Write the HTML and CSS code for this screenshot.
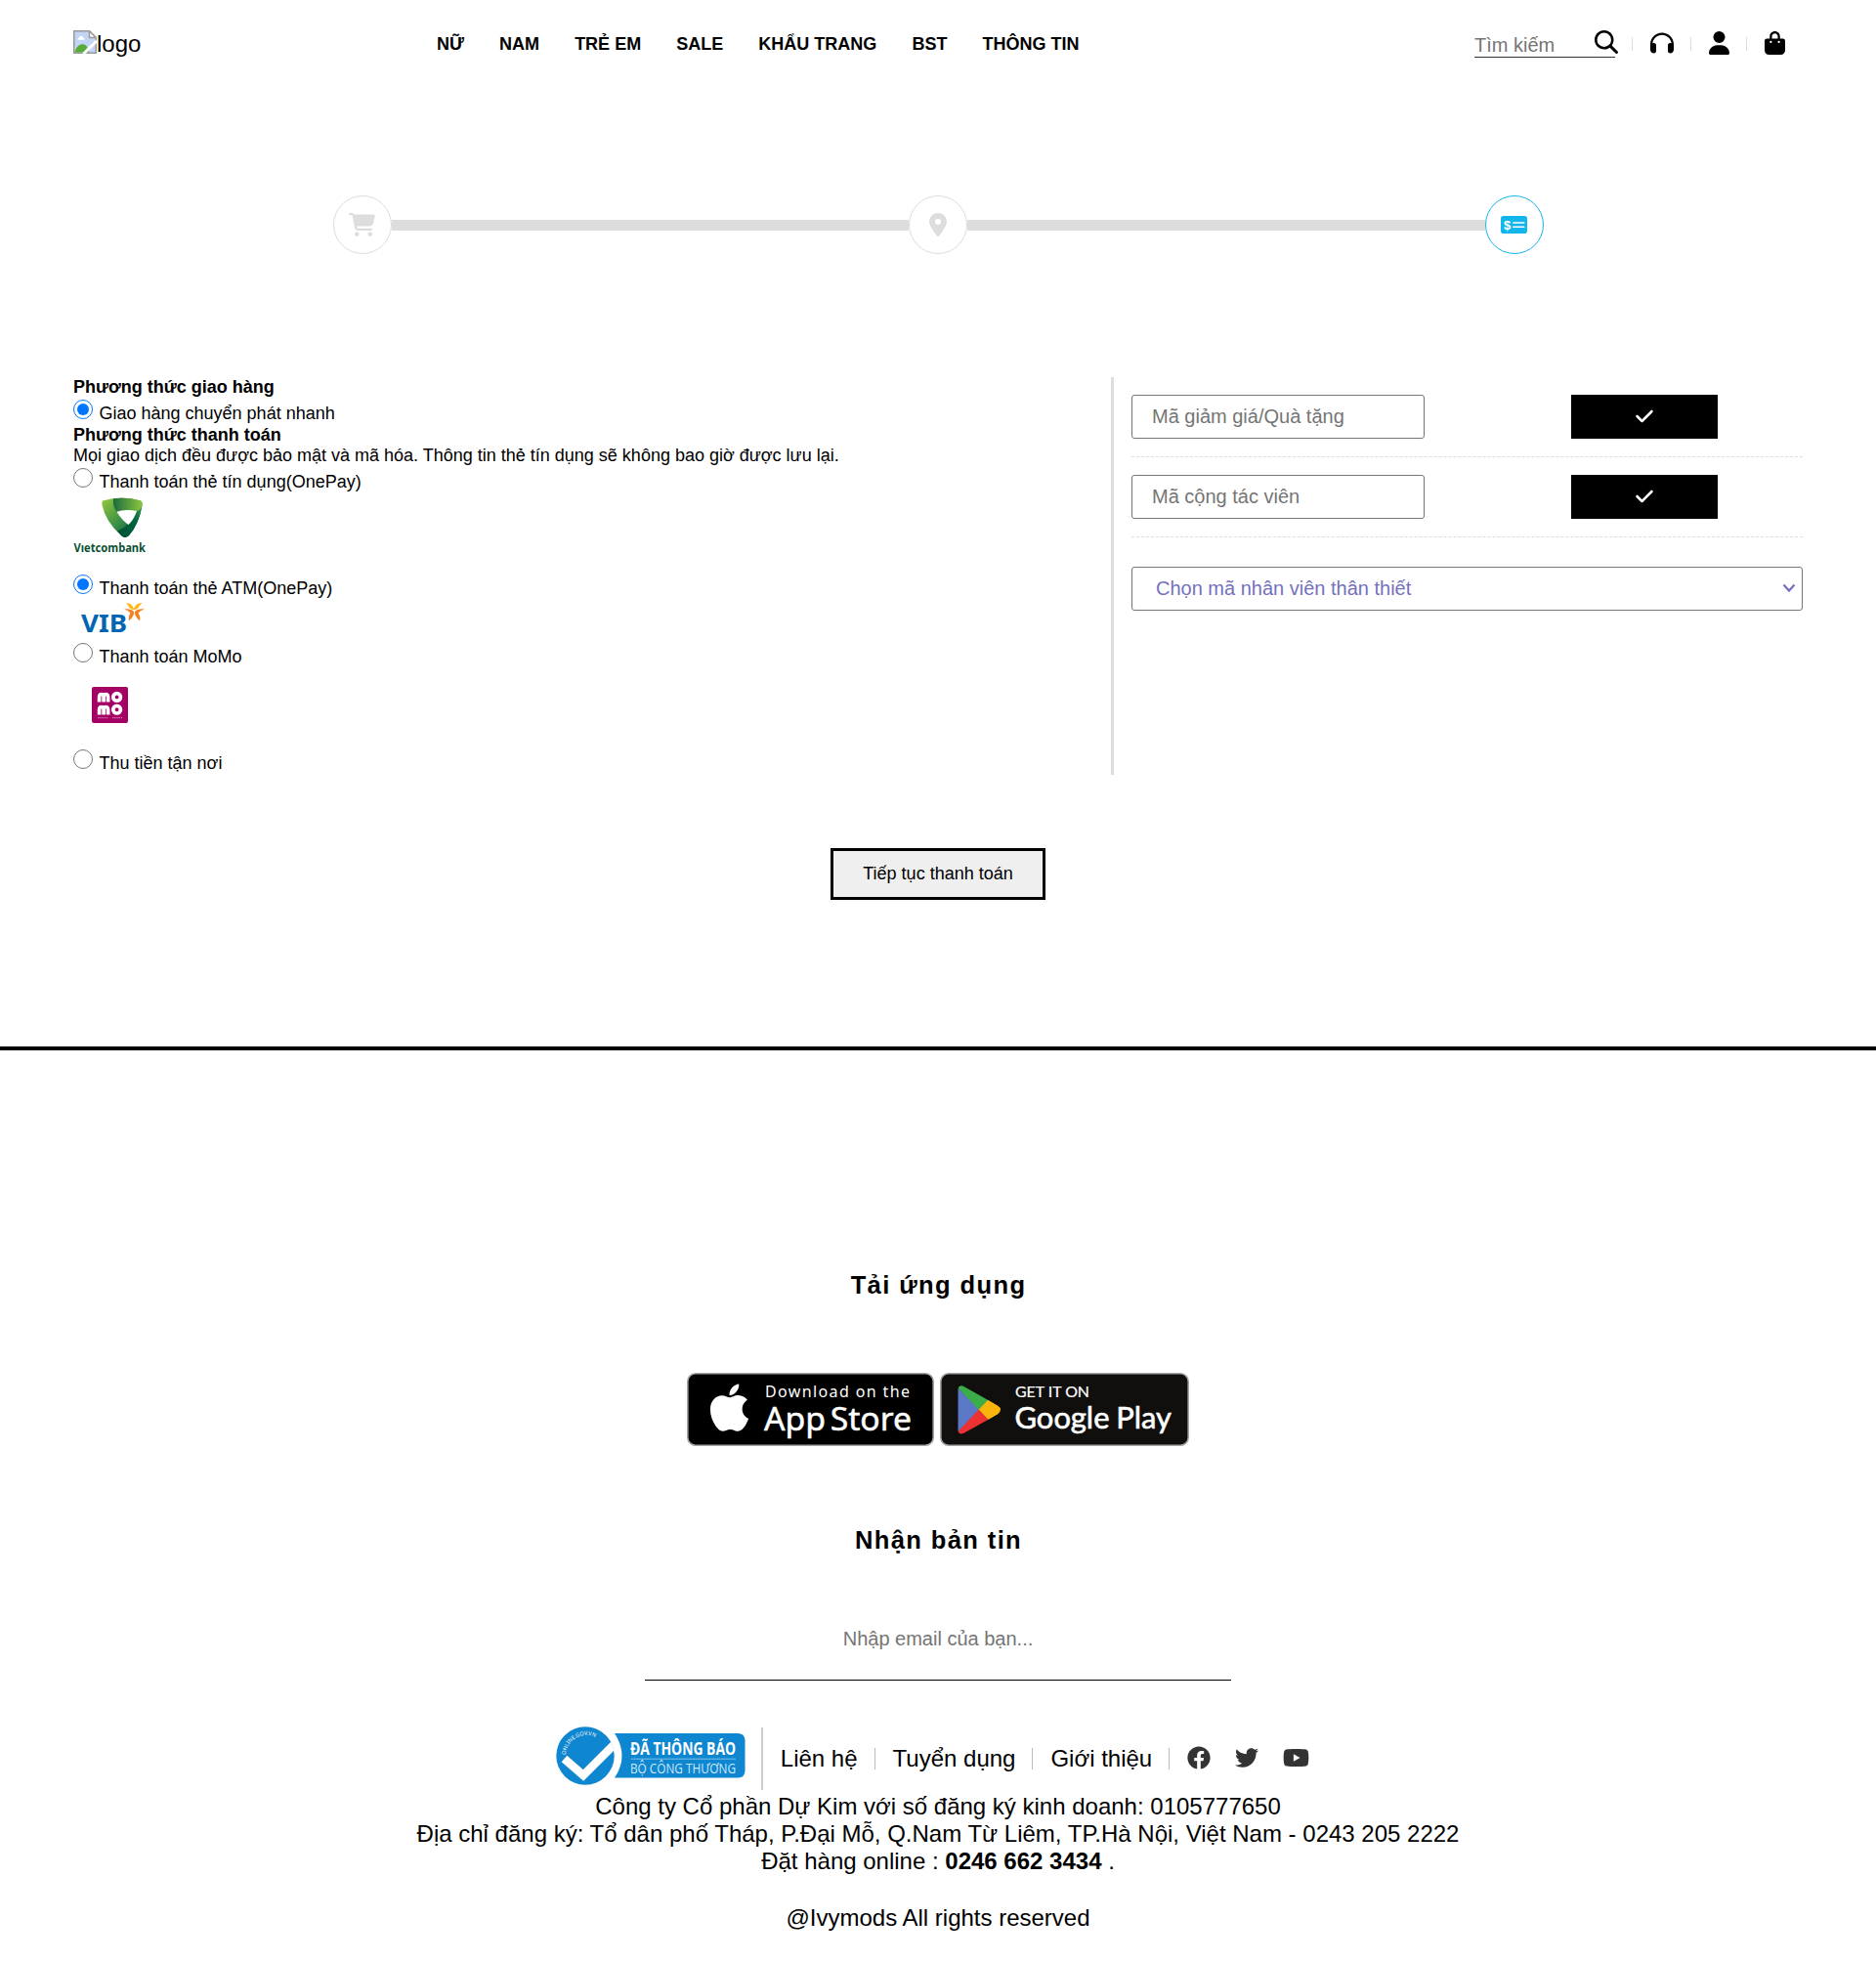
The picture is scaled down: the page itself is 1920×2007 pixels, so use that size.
FILE: index.html
```html
<!DOCTYPE html>
<html lang="vi">
<head>
<meta charset="UTF-8">
<title>Thanh toán</title>
<link rel="stylesheet" href="styles.css">
</head>
<body>
<header class="header">
  <a class="logo">
    <svg width="24" height="24" viewBox="0 0 16 16" aria-hidden="true">
      <path d="M.5 .5h10.5l4.500 4.500v10.500h-15z" fill="#c3d5f5" stroke="#9a9a9a"/>
      <path d="M1 15c1-4 3-5.500 5.500-5.500S10 12 11 15z" fill="#57ab36"/>
      <path d="M3 6.500c0-1.500 1-1.500 1.300-2.200.8-1 2-.5 2.200.5.800 0 1.300.7 1.100 1.700z" fill="#fff"/>
      <path d="M11 .5v4.500h4.500z" fill="#fff" stroke="#9a9a9a"/>
      <path d="M16 7.200L7 16" stroke="#fff" stroke-width="2"/>
    </svg><span>logo</span>
  </a>
  <nav class="menu">
    <a>NỮ</a><a>NAM</a><a>TRẺ EM</a><a>SALE</a><a>KHẨU TRANG</a><a>BST</a><a>THÔNG TIN</a>
  </nav>
  <div class="tools">
    <div class="tool">
      <div class="search">
        <input class="search-input" type="text" placeholder="Tìm kiếm">
        <svg class="search-icon" width="24" height="24" viewBox="0 0 512 512"><path d="M416 208c0 45.900-14.900 88.300-40 122.700L502.600 457.400c12.500 12.500 12.500 32.800 0 45.300s-32.800 12.500-45.300 0L330.700 376c-34.400 25.200-76.800 40-122.700 40C93.100 416 0 322.900 0 208S93.100 0 208 0S416 93.100 416 208zM208 362a154 154 0 1 0 0-308 154 154 0 1 0 0 308z"/></svg>
      </div>
    </div>
    <div class="tool"><svg width="24" height="24" viewBox="0 0 512 512"><path d="M256 80C149.900 80 62.400 159.400 49.600 262c9.400-3.800 19.600-6 30.400-6c26.500 0 48 21.500 48 48V432c0 26.500-21.500 48-48 48c-44.200 0-80-35.800-80-80V288C0 146.600 114.600 32 256 32s256 114.600 256 256v112c0 44.200-35.800 80-80 80c-26.500 0-48-21.500-48-48V304c0-26.500 21.500-48 48-48c10.800 0 21 2.100 30.400 6C449.600 159.400 362.100 80 256 80z"/></svg></div>
    <div class="tool"><svg width="21" height="24" viewBox="0 0 448 512"><path d="M224 256A128 128 0 1 0 224 0a128 128 0 1 0 0 256zm-45.700 48C79.800 304 0 383.800 0 482.300C0 498.700 13.300 512 29.700 512H418.300c16.400 0 29.700-13.300 29.700-29.700C448 383.800 368.200 304 269.700 304H178.300z"/></svg></div>
    <div class="tool"><svg width="21" height="24" viewBox="0 0 448 512"><path d="M160 112c0-35.300 28.700-64 64-64s64 28.700 64 64v48H160V112zm-48 48H48c-26.500 0-48 21.500-48 48V416c0 53 43 96 96 96H352c53 0 96-43 96-96V208c0-26.500-21.500-48-48-48H336V112C336 50.100 285.900 0 224 0S112 50.100 112 112v48zm24 48a24 24 0 1 1 0 48 24 24 0 1 1 0-48zm152 24a24 24 0 1 1 48 0 24 24 0 1 1 -48 0z"/></svg></div>
  </div>
</header>

<section class="steps">
  <div class="step"><svg width="27" height="24" viewBox="0 0 576 512"><path d="M0 24C0 10.700 10.700 0 24 0H69.500c22 0 41.500 12.800 50.600 32h411c26.300 0 45.500 25 38.600 50.400l-41 152.300c-8.500 31.400-37 53.300-69.500 53.300H170.700l5.400 28.500c2.200 11.300 12.100 19.500 23.600 19.500H488c13.300 0 24 10.700 24 24s-10.700 24-24 24H199.700c-34.600 0-64.300-24.600-70.700-58.500L77.400 54.500c-.7-3.800-4-6.500-7.900-6.500H24C10.700 48 0 37.300 0 24zM128 464a48 48 0 1 1 96 0 48 48 0 1 1 -96 0zm336-48a48 48 0 1 1 0 96 48 48 0 1 1 0-96z"/></svg></div>
  <div class="step-line"></div>
  <div class="step"><svg width="18" height="24" viewBox="0 0 384 512"><path d="M215.700 499.200C267 435 384 279.400 384 192C384 86 298 0 192 0S0 86 0 192c0 87.400 117 243 168.300 307.200c12.300 15.300 35.100 15.300 47.400 0zM192 128a64 64 0 1 1 0 128 64 64 0 1 1 0-128z"/></svg></div>
  <div class="step-line"></div>
  <div class="step step-active"><svg width="27" height="18" viewBox="0 0 27 18"><rect width="27" height="18" rx="2.800"/><path d="M12.800 7h11M12.800 11.300h11" stroke="#fff" stroke-width="1.500" stroke-linecap="round"/><text class="dollar" x="3" y="13.600">$</text></svg></div>
</section>

<main class="payment">
  <div class="methods">
    <p class="method-title">Phương thức giao hàng</p>
    <label class="option"><input type="radio" name="ship" checked><span>Giao hàng chuyển phát nhanh</span></label>
    <p class="method-title">Phương thức thanh toán</p>
    <p class="method-note">Mọi giao dịch đều được bảo mật và mã hóa. Thông tin thẻ tín dụng sẽ không bao giờ được lưu lại.</p>
    <label class="option"><input type="radio" name="card"><span>Thanh toán thẻ tín dụng(OnePay)</span></label>
    <div class="brand brand-tall">
      <svg width="76" height="82" viewBox="0 0 76 82">
        <defs>
          <linearGradient id="vcbLeft" x1="0" y1="0" x2=".9" y2="1"><stop offset="0" stop-color="#98cb3c"/><stop offset=".55" stop-color="#3b8f47"/><stop offset="1" stop-color="#00573a"/></linearGradient>
          <linearGradient id="vcbTop" x1="0" y1="0" x2="1" y2="0"><stop offset="0" stop-color="#1c6b3f"/><stop offset="1" stop-color="#8cc63f"/></linearGradient>
          <linearGradient id="vcbRight" x1="1" y1="0" x2="0" y2="1"><stop offset="0" stop-color="#3f9a49"/><stop offset=".4" stop-color="#00643f"/><stop offset="1" stop-color="#004d35"/></linearGradient>
        </defs>
        <path d="M30 8.500Q40 5.500 50 5.500T69 8.500Q71 9.500 70.500 13Q67.500 32 57 44Q53 47.500 49.500 44.500Q33 30 29.500 13Q29 9.500 30 8.500z" fill="url(#vcbLeft)"/>
        <path d="M70.500 13Q67.500 32 57 44Q53 47.500 49.500 44.500L45 39.500Q59 34 64 19Q68 18 70.500 13z" fill="url(#vcbRight)"/>
        <path d="M41 6.300Q55 4.500 69 8.500Q71 10 70.300 14Q67 21 60 20Q52 17.500 44 20Q40 13 41 6.300z" fill="url(#vcbTop)"/>
        <path d="M44.500 19.800Q53 16.500 65 19Q62 28 56.500 33Q50 29 44.500 19.800z" fill="#fff"/>
        <text class="vcb-name" x=".5" y="61" textLength="73.500" lengthAdjust="spacingAndGlyphs">Vıetcombank</text>
      </svg>
    </div>
    <label class="option"><input type="radio" name="atm" checked><span>Thanh toán thẻ ATM(OnePay)</span></label>
    <div class="brand brand-short">
      <svg width="76" height="42" viewBox="0 0 76 42">
        <text class="vib-name" x="8" y="34" textLength="47" lengthAdjust="spacingAndGlyphs">VIB</text>
        <path d="M54 4q6 0 8 6q2-6 8.500-6q-2.500 2.500-4 5q-1.500 2-4.500 2t-4.500-2q-1.500-3-3.500-5z" fill="#fdb515"/>
        <path d="M52 10.500q7-1 10 2.500q1 4-5 9.500q-1-5 1.500-8q-2-3-6.500-4zM73 10.500q-7-1-10 2.500q-1 4 5 9.500q1-5-1.500-8q2-3 6.500-4z" fill="#f58220"/>
      </svg>
    </div>
    <label class="option"><input type="radio" name="momo"><span>Thanh toán MoMo</span></label>
    <div class="brand brand-tall">
      <svg width="76" height="81" viewBox="0 0 76 81">
        <rect x="19" y="20" width="37" height="37" rx="2" fill="#a50064"/>
        <g fill="none" stroke="#fff" stroke-width="3.700">
          <path d="M26.600 35.500v-5q0-3 2.200-3t2.300 3v5v-5q0-3 2.200-3t2.300 3v5"/>
          <circle cx="44.600" cy="30.400" r="3.800"/>
          <path d="M26.600 48.500v-5q0-3 2.200-3t2.300 3v5v-5q0-3 2.200-3t2.300 3v5"/>
          <circle cx="44.600" cy="43.200" r="3.800"/>
          <path d="M25 51.700h11M40 51.700h10" stroke-width=".8" stroke-dasharray="1.500 .7" opacity=".7"/>
        </g>
      </svg>
    </div>
    <label class="option"><input type="radio" name="cod"><span>Thu tiền tận nơi</span></label>
  </div>
  <div class="codes">
    <div class="code-row"><input class="code-input" type="text" placeholder="Mã giảm giá/Quà tặng"><button class="code-button"><svg width="18" height="20" viewBox="0 0 448 512"><path d="M438.600 105.400c12.500 12.500 12.500 32.800 0 45.300l-256 256c-12.500 12.500-32.800 12.500-45.300 0l-128-128c-12.500-12.500-12.500-32.800 0-45.300s32.800-12.500 45.300 0L160 338.700 393.400 105.400c12.500-12.500 32.800-12.500 45.300 0z"/></svg></button></div>
    <div class="code-row"><input class="code-input" type="text" placeholder="Mã cộng tác viên"><button class="code-button"><svg width="18" height="20" viewBox="0 0 448 512"><path d="M438.600 105.400c12.500 12.500 12.500 32.800 0 45.300l-256 256c-12.500 12.500-32.800 12.500-45.300 0l-128-128c-12.500-12.500-12.500-32.800 0-45.300s32.800-12.500 45.300 0L160 338.700 393.400 105.400c12.500-12.500 32.800-12.500 45.300 0z"/></svg></button></div>
    <div class="staff-select"><span>Chọn mã nhân viên thân thiết</span><svg width="14" height="10" viewBox="0 0 14 10"><path d="M1.500 1.500L7 7.500L12.500 1.500" fill="none" stroke="#7470bd" stroke-width="2.200"/></svg></div>
  </div>
</main>
<div class="continue"><button class="continue-button">Tiếp tục thanh toán</button></div>

<section class="app">
  <h2 class="section-title">Tải ứng dụng</h2>
  <div class="stores">
    <svg width="253" height="75" viewBox="0 0 253 75">
      <rect x=".8" y=".8" width="251.400" height="73.400" rx="8" fill="#000" stroke="#a6a6a6" stroke-width="1.600"/>
      <g transform="translate(23.500 8) scale(.104 .108)"><path fill="#fff" d="M318.700 268.700c-.2-36.700 16.400-64.400 50-84.800-18.800-26.900-47.200-41.700-84.700-44.600-35.500-2.800-74.300 20.700-88.500 20.700-15 0-49.400-19.700-76.400-19.700C63.300 141.200 4 184.800 4 273.500q0 39.300 14.400 81.200c12.800 36.700 59 126.700 107.200 125.200 25.200-.6 43-17.900 75.800-17.900 31.800 0 48.300 17.900 76.400 17.900 48.600-.7 90.400-82.500 102.600-119.300-65.200-30.700-61.700-90-61.700-91.900zm-56.600-164.200c27.300-32.400 24.800-61.900 24-72.500-24.100 1.400-52 16.400-67.900 34.900-17.500 19.800-27.800 44.300-25.600 71.900 26.100 2 49.900-11.400 69.500-34.300z"/></g>
      <text class="apple-small" x="80" y="25" textLength="148">Download on the</text>
      <text class="apple-big" x="79" y="59" textLength="151" lengthAdjust="spacingAndGlyphs">App Store</text>
    </svg>
    <svg width="255" height="75" viewBox="0 0 255 75">
      <rect x=".8" y=".8" width="253.400" height="73.400" rx="8" fill="#100f0d" stroke="#a6a6a6" stroke-width="1.600"/>
      <clipPath id="playShape"><path d="M18.500 17Q19 12.500 23.500 13.500L59 33.500Q65 37.500 59 42.500L24 62Q19 63.500 18.500 59z"/></clipPath>
      <g clip-path="url(#playShape)">
        <path d="M17 14L41 37.800L17 62z" fill="#5a78c6"/>
        <path d="M17 14L23 10L51 28L39.500 37.800z" fill="#3cae49"/>
        <path d="M39.500 37.800L50 27L66 37.500L50 49z" fill="#f9b50b"/>
        <path d="M17 61.500L39.500 37.800L50 48.500L24 66z" fill="#ec3132"/>
      </g>
      <text class="google-small" x="77" y="24.700" textLength="76" lengthAdjust="spacingAndGlyphs">GET IT ON</text>
      <text class="google-big" x="76.500" y="57" textLength="160.500" lengthAdjust="spacingAndGlyphs">Google Play</text>
    </svg>
  </div>
  <h2 class="section-title">Nhận bản tin</h2>
  <input class="email" type="text" placeholder="Nhập email của bạn...">
</section>

<footer class="footer">
  <div class="footer-links">
    <div class="notice">
      <svg width="194" height="60" viewBox="0 0 194 60">
        <path d="M60 7H186q7.500 0 7.500 7.500V45q0 7.500-7.500 7.500H60Q75 30 60 7z" fill="#0e86d0"/>
        <circle cx="30" cy="30" r="29.700" fill="#0e86d0"/>
        <clipPath id="tickArea"><circle cx="30" cy="30" r="29.800"/></clipPath>
        <path d="M8.500 33L28 50L66 12" fill="none" stroke="#fff" stroke-width="8.500" clip-path="url(#tickArea)"/>
        <path id="arc" d="M10 29A21 21 0 0 1 48 17.500" fill="none"/>
        <text class="notice-arc"><textPath href="#arc">ONLINE.GOV.VN</textPath></text>
        <text class="notice-big" x="76" y="28.700" textLength="108" lengthAdjust="spacingAndGlyphs">ĐÃ THÔNG BÁO</text>
        <path d="M77 33.200H184" stroke="#7cc0e9"/>
        <text class="notice-small" x="76" y="48" textLength="108" lengthAdjust="spacingAndGlyphs">BỘ CÔNG THƯƠNG</text>
      </svg>
    </div>
    <a class="link">Liên hệ</a><a class="link">Tuyển dụng</a><a class="link">Giới thiệu</a>
    <div class="social">
      <svg width="24" height="24" viewBox="0 0 512 512"><path d="M504 256C504 119 393 8 256 8S8 119 8 256c0 123.780 90.690 226.380 209.250 245V327.690h-63V256h63v-54.640c0-62.150 37-96.480 93.670-96.480 27.140 0 55.520 4.840 55.520 4.840v61h-31.280c-30.800 0-40.410 19.120-40.410 38.730V256h68.780l-11 71.690h-57.780V501C413.310 482.380 504 379.780 504 256z"/></svg>
      <svg width="24" height="24" viewBox="0 0 512 512"><path d="M459.370 151.716c.325 4.548.325 9.097.325 13.645 0 138.720-105.583 298.558-298.558 298.558-59.452 0-114.680-17.219-161.137-47.106 8.447.974 16.568 1.299 25.340 1.299 49.055 0 94.213-16.568 130.274-44.832-46.132-.975-84.792-31.188-98.112-72.772 6.498.974 12.995 1.624 19.818 1.624 9.421 0 18.843-1.300 27.614-3.573-48.081-9.747-84.143-51.980-84.143-102.985v-1.299c13.969 7.797 30.214 12.670 47.431 13.319-28.264-18.843-46.781-51.005-46.781-87.391 0-19.492 5.197-37.360 14.294-52.954 51.655 63.675 129.300 105.258 216.365 109.807-1.624-7.797-2.599-15.918-2.599-24.040 0-57.828 46.782-104.934 104.934-104.934 30.213 0 57.502 12.670 76.670 33.137 23.715-4.548 46.456-13.320 66.599-25.340-7.798 24.366-24.366 44.833-46.132 57.827 21.117-2.273 41.584-8.122 60.426-16.243-14.292 20.791-32.161 39.308-52.628 54.253z"/></svg>
      <svg width="27" height="24" viewBox="0 0 576 512"><path d="M549.655 124.083c-6.281-23.650-24.787-42.276-48.284-48.597C458.781 64 288 64 288 64S117.220 64 74.629 75.486c-23.497 6.322-42.003 24.947-48.284 48.597-11.412 42.867-11.412 132.305-11.412 132.305s0 89.438 11.412 132.305c6.281 23.650 24.787 41.500 48.284 47.821C117.220 448 288 448 288 448s170.780 0 213.371-11.486c23.497-6.321 42.003-24.171 48.284-47.821 11.412-42.867 11.412-132.305 11.412-132.305s0-89.438-11.412-132.305zm-317.510 213.508V175.185l142.739 81.205-142.739 81.201z"/></svg>
    </div>
  </div>
  <p class="address">Công ty Cổ phần Dự Kim với số đăng ký kinh doanh: 0105777650<br>Địa chỉ đăng ký: Tổ dân phố Tháp, P.Đại Mỗ, Q.Nam Từ Liêm, TP.Hà Nội, Việt Nam - 0243 205 2222<br>Đặt hàng online : <b>0246 662 3434</b> .</p>
  <p class="copyright">@Ivymods All rights reserved</p>
</footer>
</body>
</html>
```
FILE: styles.css
```css
* {
  box-sizing: border-box;
  margin: 0;
  padding: 0;
}

body {
  background: #fff;
  color: #000;
  font-family: "Liberation Sans", Arial, sans-serif;
  font-size: 24px;
  line-height: 28px;
}

svg {
  display: block;
  flex: none;
}

input,
button {
  font-family: inherit;
}

input::placeholder {
  color: #757575;
  opacity: 1;
}

/* Header */
.header {
  display: flex;
  align-items: center;
  height: 90px;
  padding: 0 75px;
}

.logo {
  display: flex;
  align-items: center;
  width: 372px;
  padding-bottom: 3px;
}

.logo svg {
  margin-top: -2px;
}

.logo span {
  padding-top: 3px;
}

.menu {
  display: flex;
  gap: 36.1px;
  font-size: 18px;
  font-weight: bold;
}

.tools {
  display: flex;
  align-items: center;
  height: 90px;
  margin-left: auto;
}

.tool {
  display: flex;
  align-items: center;
  height: 14px;
  padding: 0 17px 0 18px;
  border-right: 1px solid #ddd;
}

.tool:first-child {
  padding-left: 0;
}

.tool:last-child {
  padding-right: 18px;
  border-right: 0;
}

.tool svg {
  margin-bottom: 2px;
  fill: #000;
}

.search {
  position: relative;
  width: 144px;
}

.search-input {
  display: block;
  width: 144px;
  height: 27px;
  padding-top: 3px;
  border: 0;
  border-bottom: 1px solid #333;
  background: transparent;
  font-size: 20px;
}

.search-icon {
  position: absolute;
  top: -1px;
  right: -3px;
}

/* Progress */
.steps {
  display: flex;
  align-items: center;
  width: 1239px;
  margin: 110px auto 126px;
}

.step {
  display: flex;
  flex: none;
  align-items: center;
  justify-content: center;
  width: 60px;
  height: 60px;
  border: 1px solid #ddd;
  border-radius: 50%;
  fill: #ddd;
}

.step-line {
  flex: 1;
  height: 11px;
  background: #ddd;
}

.step-active {
  border-color: #12b6ea;
  fill: #12b6ea;
}

.dollar {
  fill: #fff;
  font: bold 13px "Liberation Sans", sans-serif;
}

/* Payment */
.payment {
  display: flex;
  height: 407px;
  padding: 0 75px;
  font-size: 18px;
}

.methods {
  width: 1062px;
}

.method-title,
.method-note {
  height: 21px;
  line-height: 21px;
}

.method-title {
  font-weight: bold;
}

.option {
  display: flex;
  gap: 6.5px;
  height: 27.5px;
}

.option input {
  width: 20px;
  height: 20px;
  margin-top: 2px;
}

.option span {
  padding-top: 6px;
  line-height: 21px;
}

.brand-tall {
  height: 81.5px;
}

.brand-short {
  height: 42.5px;
}

.vcb-name {
  fill: #0b4f33;
  font: bold 13px "Noto Sans", sans-serif;
}

.vib-name {
  fill: #0066b3;
  font: bold 25px "Noto Sans", sans-serif;
}

.codes {
  flex: 1;
  padding-left: 18px;
  border-left: 3px solid #ddd;
}

.code-row {
  display: flex;
  justify-content: space-between;
  padding: 18px 87px 18px 0;
  border-bottom: 1px dashed #ddd;
}

.code-input {
  width: 300px;
  height: 45px;
  padding: 0 20px;
  border: 1px solid #767676;
  border-radius: 3px;
  font-size: 20px;
}

.code-button {
  display: flex;
  align-items: center;
  justify-content: center;
  width: 150px;
  height: 45px;
  padding-bottom: 2px;
  border: 0;
  background: #000;
  fill: #fff;
}

.staff-select {
  display: flex;
  align-items: center;
  justify-content: space-between;
  height: 45px;
  margin-top: 30px;
  padding: 0 6px 1px 24px;
  border: 1px solid #767676;
  border-radius: 3px;
  color: #7470bd;
  font-size: 20px;
}

.continue {
  display: flex;
  justify-content: center;
  padding: 75px 0 150px;
  border-bottom: 4px solid #000;
}

.continue-button {
  width: 220px;
  height: 53px;
  border: 3px solid #000;
  background: #efefef;
  color: #000;
  font-size: 18px;
}

/* App and newsletter */
.app {
  display: flex;
  flex-direction: column;
  align-items: center;
  padding-top: 225px;
}

.section-title {
  padding-left: 1px;
  font-size: 25.5px;
  letter-spacing: 1.4px;
  line-height: 30px;
}

.stores {
  display: flex;
  gap: 6px;
  margin: 75px 0 81px;
  padding-right: 1px;
}

.apple-small,
.apple-big {
  fill: #fff;
  font-family: "Noto Sans", sans-serif;
}

.apple-small {
  font-size: 16px;
}

.apple-big {
  font-size: 33px;
  stroke: #fff;
  stroke-width: .5px;
  word-spacing: -4px;
}

.google-small,
.google-big {
  fill: #fff;
  stroke: #fff;
  font-family: Lato, sans-serif;
}

.google-small {
  font-size: 16px;
  stroke-width: .2px;
}

.google-big {
  font-size: 31px;
  stroke-width: .6px;
  word-spacing: -1px;
}

.email {
  width: 600px;
  height: 85px;
  margin-top: 44px;
  border: 0;
  border-bottom: 1px solid #000;
  font-size: 20px;
  text-align: center;
}

/* Footer */
.footer {
  padding-top: 48px;
  text-align: center;
}

.footer-links {
  display: flex;
  align-items: center;
  justify-content: center;
  height: 64px;
  margin-bottom: 3px;
}

.notice {
  height: 64px;
  padding-right: 16px;
  border-right: 2px solid #ccc;
}

.notice svg {
  margin-top: -1px;
}

.notice-arc {
  fill: #fff;
  font: 5.5px "Noto Sans", sans-serif;
}

.notice-big {
  fill: #fff;
  font: bold 18.5px "Open Sans", sans-serif;
}

.notice-small {
  fill: #cfe8f8;
  font: 14px "Open Sans", sans-serif;
}

.link {
  height: 22px;
  padding: 0 17px 0 18px;
  border-right: 1px solid #bbb;
  line-height: 21px;
}

.social {
  display: flex;
  gap: 25px;
  padding: 0 11px 2px 18px;
  fill: #333;
}

.copyright {
  padding: 30px 0;
}
```
